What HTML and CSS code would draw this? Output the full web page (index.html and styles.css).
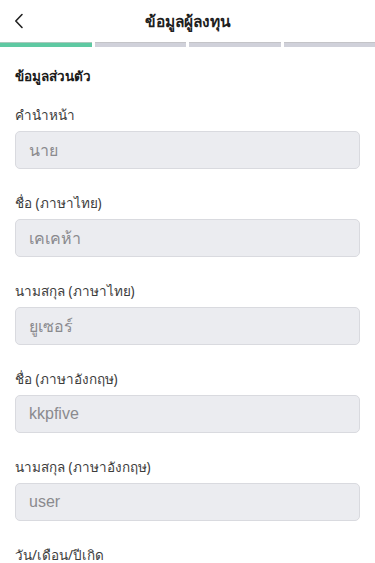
FILE: index.html
```html
<!DOCTYPE html>
<html lang="th">
<head>
<meta charset="utf-8">
<meta name="viewport" content="width=device-width, initial-scale=1">
<link rel="stylesheet" href="styles.css">
</head>
<body>
<header class="topbar">
  <button class="back" aria-label="back">
    <svg width="10" height="16" viewBox="0 0 10 16"><path d="M8 1.5 L1.8 8 L8 14.5" fill="none" stroke="#222" stroke-width="1.6" stroke-linecap="round" stroke-linejoin="round"/></svg>
  </button>
  <h1 class="title">ข้อมูลผู้ลงทุน</h1>
</header>
<div class="progress">
  <span class="seg active"></span>
  <span class="seg"></span>
  <span class="seg"></span>
  <span class="seg"></span>
</div>
<main class="content">
  <h2 class="section">ข้อมูลส่วนตัว</h2>
  <div class="field">
    <div class="label">คำนำหน้า</div>
    <div class="box">นาย</div>
  </div>
  <div class="field">
    <div class="label">ชื่อ (ภาษาไทย)</div>
    <div class="box">เคเคห้า</div>
  </div>
  <div class="field">
    <div class="label">นามสกุล (ภาษาไทย)</div>
    <div class="box">ยูเซอร์</div>
  </div>
  <div class="field">
    <div class="label">ชื่อ (ภาษาอังกฤษ)</div>
    <div class="box">kkpfive</div>
  </div>
  <div class="field">
    <div class="label">นามสกุล (ภาษาอังกฤษ)</div>
    <div class="box">user</div>
  </div>
  <div class="field">
    <div class="label">วัน/เดือน/ปีเกิด</div>
  </div>
</main>
</body>
</html>
```
FILE: styles.css
```css
* { box-sizing: border-box; }
html, body { margin: 0; padding: 0; background: #fff; }
body {
  font-family: "Noto Sans", "DejaVu Sans", "Liberation Sans", sans-serif;
  color: #222;
  width: 375px;
  overflow: hidden;
}
.topbar {
  height: 42px;
  display: flex;
  align-items: center;
  justify-content: center;
  position: relative;
}
.back {
  position: absolute;
  left: 10px;
  top: 12px;
  width: 18px;
  height: 18px;
  border: 0;
  background: none;
  padding: 0;
  display: flex;
  align-items: center;
  justify-content: center;
}
.title {
  margin: 0;
  font-size: 15.5px;
  font-weight: 700;
  color: #1f1f1f;
  line-height: 22px;
}
.progress {
  display: flex;
  gap: 3px;
  height: 5px;
}
.seg {
  flex: 1;
  background: #d0d1da;
  border-top: 1px solid #c4c4c8;
}
.seg.active {
  background: #5ec9a2;
  border-top-color: #a9c9bc;
}
.content {
  padding: 18px 15px 0;
}
.section {
  margin: 0 0 16px;
  font-size: 13.5px;
  font-weight: 700;
  line-height: 22px;
  color: #1a1a1a;
}
.field {
  margin-bottom: 22px;
}
.label {
  font-size: 13.5px;
  line-height: 24px;
  color: #3c3c3c;
  margin-bottom: 4px;
}
.box {
  height: 38px;
  border: 1px solid #d9dadf;
  background: #ebecf0;
  border-radius: 5px;
  padding: 0 13px;
  display: flex;
  align-items: center;
  font-family: "Liberation Sans", "Noto Sans", sans-serif;
  font-size: 16px;
  color: #8a8a8e;
}
```
